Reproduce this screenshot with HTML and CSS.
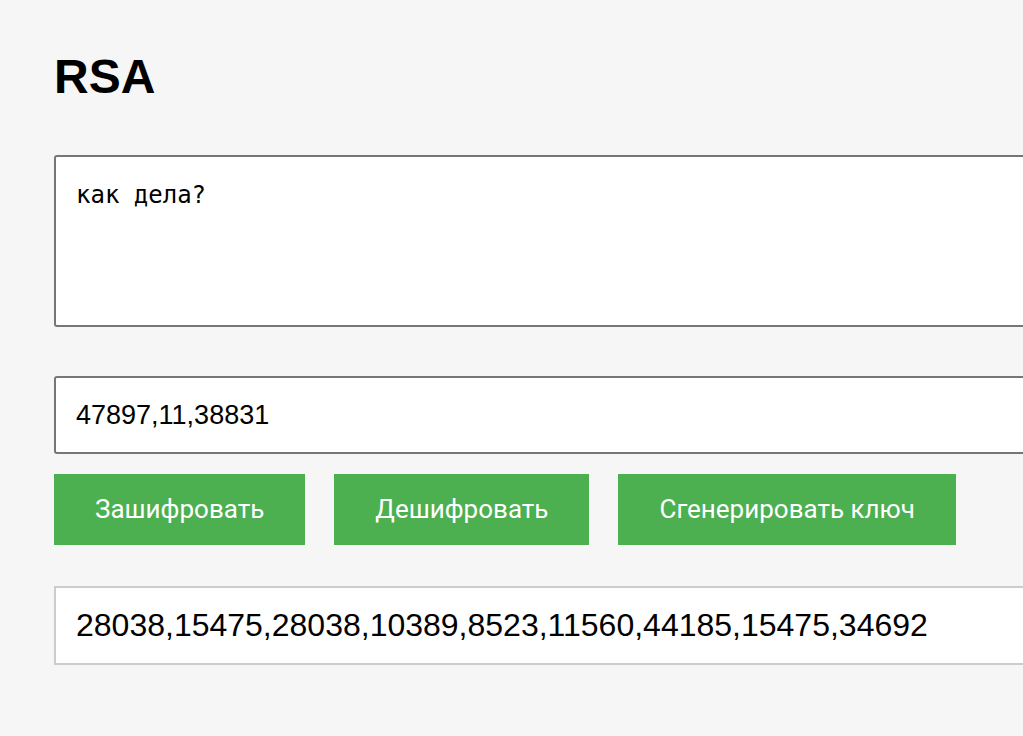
FILE: index.html
```html
<!DOCTYPE html>
<html lang="ru">
<head>
<meta charset="utf-8">
<title>RSA</title>
<link rel="stylesheet" href="styles.css">
</head>
<body>
<main class="page">
  <h1 class="title">RSA</h1>
  <textarea class="message">как дела?</textarea>
  <input class="key" type="text" value="47897,11,38831">
  <div class="actions">
    <button class="btn">Зашифровать</button>
    <button class="btn">Дешифровать</button>
    <button class="btn">Сгенерировать ключ</button>
  </div>
  <div class="output">28038,15475,28038,10389,8523,11560,44185,15475,34692</div>
</main>
</body>
</html>
```

FILE: styles.css
```css
html, body {
  margin: 0;
  padding: 0;
  background: #f6f6f6;
  overflow: hidden;
}

.page {
  width: 1060px;
  padding: 49px 0 0 54px;
  display: flex;
  flex-direction: column;
  font-family: "Liberation Sans", Arial, sans-serif;
}

.title {
  margin: 0;
  font-size: 48px;
  line-height: 55px;
  font-weight: bold;
  color: #000;
}

.message {
  margin-top: 51px;
  box-sizing: border-box;
  width: 100%;
  height: 172px;
  padding: 20px;
  border: 2px solid #767676;
  border-radius: 3px;
  background: #fff;
  font-family: "DejaVu Sans Mono", monospace;
  font-size: 24px;
  line-height: 36px;
  color: #000;
  resize: none;
  outline: none;
}

.key {
  margin-top: 49px;
  box-sizing: border-box;
  width: 100%;
  height: 78px;
  padding: 0 20px;
  border: 2px solid #767676;
  border-radius: 3px;
  background: #fff;
  font-family: "Liberation Sans", Arial, sans-serif;
  font-size: 27px;
  color: #000;
  outline: none;
}

.actions {
  margin-top: 20px;
  display: flex;
  gap: 29px;
}

.btn {
  height: 71px;
  padding: 0 41px 2px;
  border: none;
  background: #4caf50;
  color: #fff;
  font-family: Roboto, sans-serif;
  font-size: 26px;
  cursor: pointer;
}

.output {
  margin-top: 41px;
  box-sizing: border-box;
  width: 100%;
  height: 79px;
  padding: 0 20px;
  display: flex;
  align-items: center;
  border: 2px solid #cccccc;
  background: #fff;
  font-size: 32px;
  color: #000;
  white-space: nowrap;
}
```
